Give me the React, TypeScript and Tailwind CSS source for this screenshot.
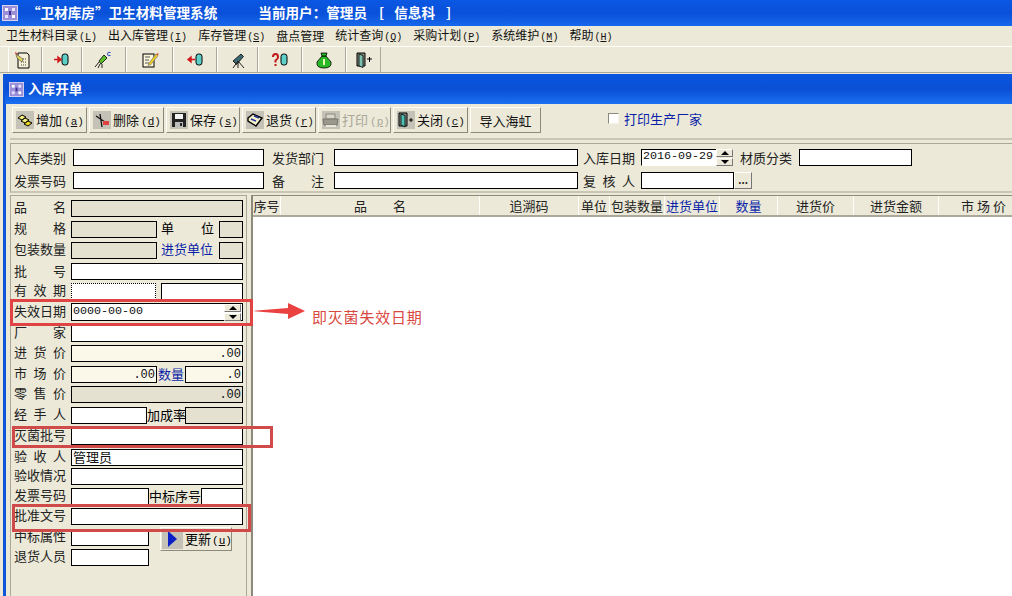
import type { ReactNode } from "react";

const song = "font-['Noto_Sans_CJK_SC','Liberation_Sans',sans-serif]";
const mono = "font-['Liberation_Mono','Noto_Sans_CJK_SC',monospace]";

const AppIcon = ({ small }: { small?: boolean }) => (
  <svg width={small ? 15 : 16} height={small ? 15 : 16} viewBox="0 0 16 16" className="shrink-0">
    <rect x="0.5" y="0.5" width="15" height="15" fill="#9a8fd8" stroke="#d8d4f0" />
    <rect x="3" y="3" width="3" height="3" fill="#fff" />
    <rect x="10" y="3" width="3" height="3" fill="#e8e4ff" />
    <rect x="7" y="6" width="2" height="4" fill="#3b2f90" />
    <rect x="3" y="10" width="3" height="3" fill="#e8e4ff" />
    <rect x="10" y="10" width="3" height="3" fill="#fff" />
  </svg>
);

const Cylinder = ({ x = 9 }: { x?: number }) => (
  <rect x={x} y="3" width="6" height="11" rx="2.5" fill="#5fd0c8" stroke="#000" />
);

const toolbarIcons: ReactNode[] = [
  <svg width="18" height="18" viewBox="0 0 18 18" key="a">
    <path d="M4 2h9l2 2v13H4z" fill="#f5f0d8" stroke="#000" />
    <path d="M7 8h6M7 11h6M7 14h6" stroke="#444" strokeDasharray="1 1" />
    <path d="M2 3l7 5-1 3-5-4z" fill="#e8d85a" stroke="#555" strokeWidth="0.7" />
    <path d="M1 1l2 1-1 2z" fill="#d01818" />
  </svg>,
  <svg width="18" height="18" viewBox="0 0 18 18" key="b">
    <Cylinder x={9} />
    <path d="M1 8.500h5M5 6l3 2.500L5 11z" stroke="#d01818" fill="#d01818" strokeWidth="1.400" />
  </svg>,
  <svg width="18" height="18" viewBox="0 0 18 18" key="c">
    <path d="M5 10l5-6 3 3-6 6z" fill="#5cc02c" stroke="#000" strokeWidth="0.8" />
    <path d="M1 16l4-5M4 17l2-4M8 17l0-4" stroke="#222" />
    <path d="M16.500 1.500q-3-1-3 1.500t3 1.500" stroke="#2040c0" fill="none" />
  </svg>,
  <svg width="18" height="18" viewBox="0 0 18 18" key="d">
    <rect x="2" y="3" width="11" height="13" fill="#fbf7dc" stroke="#000" />
    <path d="M4 6h5M4 9h4M4 12h4" stroke="#555" />
    <path d="M8 12l7-9 2 1.500-7 9-3 1z" fill="#f2d020" stroke="#777" strokeWidth="0.7" />
    <path d="M15 3l2 1.500 .5-2.500z" fill="#e04030" />
  </svg>,
  <svg width="18" height="18" viewBox="0 0 18 18" key="e">
    <Cylinder x={10} />
    <path d="M9 8.500H4M5 6L2 8.500 5 11z" stroke="#d01818" fill="#d01818" strokeWidth="1.400" />
  </svg>,
  <svg width="18" height="18" viewBox="0 0 18 18" key="f">
    <path d="M4 10l8-7 2.500 2.500-7 8z" fill="#3c6a70" stroke="#000" strokeWidth="0.8" />
    <path d="M9 10l-5 7M9 10l0 7M9 10l6 7" stroke="#222" />
  </svg>,
  <svg width="18" height="18" viewBox="0 0 18 18" key="g">
    <path d="M2 6q0-3 2.500-3t2.500 3q0 2-2.500 3.500v2" fill="none" stroke="#c01818" strokeWidth="2" />
    <rect x="3.500" y="13" width="2" height="2" fill="#c01818" />
    <Cylinder x={10} />
  </svg>,
  <svg width="18" height="18" viewBox="0 0 18 18" key="h">
    <path d="M7 5h4l5 6q1 6-7 6-8 0-7-6z" fill="#28b828" stroke="#000" strokeWidth="0.8" />
    <path d="M6 2h6l-1 3H7z" fill="#28b828" stroke="#000" strokeWidth="0.8" />
    <rect x="8" y="8" width="2" height="6" fill="#e8f8b0" />
  </svg>,
  <svg width="18" height="18" viewBox="0 0 18 18" key="i">
    <path d="M2 2h8v13H2z" fill="#8a8a80" stroke="#000" />
    <path d="M4 3l4 1.500v12L4 15z" fill="#7cc0b0" stroke="#000" strokeWidth="0.8" />
    <path d="M12 8h5M14.500 6v5" stroke="#000" />
  </svg>,
];

const toolbarCells = [
  "w-[34px] pr-[5px]",
  "w-[40px]",
  "w-[44px] pr-[3px]",
  "w-[47px]",
  "w-[44px]",
  "w-[41px]",
  "w-[44px]",
  "w-[44px]",
  "w-[35px]",
];

const Btn = ({
  icon,
  label,
  hot,
  width,
  disabled,
}: {
  icon?: ReactNode;
  label: string;
  hot?: string;
  width: string;
  disabled?: boolean;
}) => (
  <div
    className={`${width} h-[26px] flex items-center ${icon ? "pl-[3px]" : "justify-center"} gap-[2px] bg-[#ece9d8] border border-[#fffef8] border-r-[#8d8a7c] border-b-[#8d8a7c] text-[13px] leading-none shrink-0 ${
      disabled ? "text-[#a9a798]" : "text-[#111]"
    }`}
  >
    {icon}
    <span className="whitespace-nowrap">
      {label}
      {hot && (
        <span className={`${mono} text-[11px] ml-[2px]`}>
          (<span className="underline">{hot}</span>)
        </span>
      )}
    </span>
  </div>
);

const IconBg = ({ children }: { children: ReactNode }) => (
  <span className="w-[18px] h-[18px] bg-[#c4c2b6] flex items-center justify-center shrink-0">{children}</span>
);

const Input = ({
  className = "",
  children,
  tone = "white",
}: {
  className?: string;
  children?: ReactNode;
  tone?: "white" | "gray" | "cream";
}) => (
  <div
    className={`${className} h-[17px] border border-black flex items-center text-[12px] leading-none text-[#111] ${
      tone === "white" ? "bg-white" : tone === "gray" ? "bg-[#e4e1d1] border-[#55554c]" : "bg-[#fbf8ea]"
    }`}
  >
    {children}
  </div>
);

const Num = ({ v }: { v: string }) => <span className={`${mono} ml-auto pr-[1px]`}>{v}</span>;

const Label = ({ text, className = "" }: { text: string; className?: string }) => (
  <span className={`${className} w-[52px] flex justify-between text-[13px] leading-none text-[#222] shrink-0`}>
    {text.split("").map((c, i) => (
      <span key={i}>{c}</span>
    ))}
  </span>
);

const Spinner = () => (
  <div className="w-[17px] h-[17px] flex flex-col gap-[1px] shrink-0">
    <div className="flex-1 bg-[#ece9d8] border border-[#fffef8] border-r-[#777] border-b-[#777] flex items-center justify-center">
      <div className="w-0 h-0 border-x-[4px] border-x-transparent border-b-[4px] border-b-black" />
    </div>
    <div className="flex-1 bg-[#ece9d8] border border-[#fffef8] border-r-[#777] border-b-[#777] flex items-center justify-center">
      <div className="w-0 h-0 border-x-[4px] border-x-transparent border-t-[4px] border-t-black" />
    </div>
  </div>
);

const columns = [
  { t: "序号", w: "w-[28px]" },
  { t: "品　　名", w: "w-[199px]" },
  { t: "追溯码", w: "w-[99px]" },
  { t: "单位", w: "w-[31px]" },
  { t: "包装数量", w: "w-[55px]" },
  { t: "进货单位", w: "w-[55px]", blue: true },
  { t: "数量", w: "w-[58px]", blue: true },
  { t: "进货价", w: "w-[76px]" },
  { t: "进货金额", w: "w-[85px]" },
  { t: "市 场 价", w: "w-[90px]" },
];

const Row = ({ h, children }: { h: string; children: ReactNode }) => (
  <div className={`${h} flex items-start shrink-0`}>{children}</div>
);

export default function App() {
  return (
    <div className={`${song} relative w-[1012px] h-[596px] overflow-hidden bg-[#ece9d8] flex flex-col`}>
      {/* main title */}
      <div className="h-[26px] shrink-0 flex items-center pl-[2px] bg-gradient-to-b from-[#0a58e4] via-[#0a50d8] to-[#1668ec] text-white font-bold text-[13.6px] leading-none">
        <AppIcon />
        <span className="ml-[9px] whitespace-pre">“卫材库房”卫生材料管理系统</span>
        <span className="ml-[41px] whitespace-pre">当前用户：管理员</span>
        <span className="ml-[12px] whitespace-pre">[</span>
        <span className="ml-[10px] whitespace-pre">信息科</span>
        <span className="ml-[11px] whitespace-pre">]</span>
      </div>

      {/* menu */}
      <div className="h-[20px] shrink-0 flex items-center gap-[11px] pl-[6px] text-[12px] leading-none text-[#111]">
        {[
          ["卫生材料目录", "L"],
          ["出入库管理", "I"],
          ["库存管理", "S"],
          ["盘点管理", ""],
          ["统计查询", "Q"],
          ["采购计划", "P"],
          ["系统维护", "M"],
          ["帮助", "H"],
        ].map(([t, k]) => (
          <span key={t} className="whitespace-nowrap">
            {t}
            {k && (
              <span className={`${mono} text-[10px] ml-[1px]`}>
                (<span className="underline">{k}</span>)
              </span>
            )}
          </span>
        ))}
      </div>

      {/* icon toolbar */}
      <div className="h-[27px] shrink-0 flex items-stretch pl-[8px] border-t border-[#fffef8] border-b border-b-[#aca899]">
        {toolbarIcons.map((ic, i) => (
          <div
            key={i}
            className={`${toolbarCells[i]} flex items-center justify-center border-l border-[#fffef8] border-r border-r-[#aca899]`}
          >
            {ic}
          </div>
        ))}
      </div>

      {/* child window */}
      <div className="flex-1 mt-[1px] ml-[3px] flex flex-col border-l-[3px] border-[#0f55d8] min-h-0">
        <div className="h-[30px] shrink-0 -ml-[1px] flex items-center pl-[4px] gap-[4px] bg-gradient-to-b from-[#0a56e0] via-[#0a4fd6] to-[#1b6ff0] text-white font-bold text-[13.6px] leading-none">
          <AppIcon small />
          <span>入库开单</span>
        </div>

        <div className="flex-1 flex flex-col min-h-0 pl-[4px]">
          {/* button bar */}
          <div className="h-[36px] shrink-0 flex items-center pl-[2px] pb-[2px] gap-[2px] border-b-2 border-[#c9c6b5]">
            <Btn
              width="w-[75px]"
              label="增加"
              hot="a"
              icon={
                <IconBg>
                  <svg width="16" height="14" viewBox="0 0 16 14">
                    <path d="M1 5l4-3 4 2-4 3z" fill="#f4ee7a" stroke="#000" />
                    <path d="M4 8l4-3 4 2-4 3z" fill="#f4ee7a" stroke="#000" />
                    <path d="M7 11l4-3 4 2-4 3z" fill="#f0d820" stroke="#000" />
                  </svg>
                </IconBg>
              }
            />
            <Btn
              width="w-[75px]"
              label="删除"
              hot="d"
              icon={
                <IconBg>
                  <svg width="16" height="16" viewBox="0 0 16 16">
                    <path d="M2 4l9 6M6 2l2 13" stroke="#111" strokeWidth="1.300" />
                    <rect x="9" y="9" width="6" height="4" fill="#e04040" />
                  </svg>
                </IconBg>
              }
            />
            <Btn
              width="w-[74px]"
              label="保存"
              hot="s"
              icon={
                <IconBg>
                  <svg width="16" height="16" viewBox="0 0 16 16">
                    <path d="M1 1h14v14H1z" fill="#222" />
                    <rect x="4" y="2" width="8" height="5" fill="#f2f2f2" />
                    <rect x="4" y="10" width="8" height="5" fill="#bbb" />
                    <rect x="9" y="11" width="2" height="3" fill="#222" />
                  </svg>
                </IconBg>
              }
            />
            <Btn
              width="w-[74px]"
              label="退货"
              hot="r"
              icon={
                <IconBg>
                  <svg width="18" height="16" viewBox="0 0 18 16">
                    <path d="M2 6l5-4 9 4-6 8-8-5z" fill="#f4f0c8" stroke="#000" strokeWidth="1.400" />
                    <path d="M5 7l5 2M8 4l5 2" stroke="#2030a0" strokeWidth="1.400" />
                  </svg>
                </IconBg>
              }
            />
            <Btn
              width="w-[73px]"
              label="打印"
              hot="p"
              disabled
              icon={
                <IconBg>
                  <svg width="18" height="16" viewBox="0 0 18 16">
                    <path d="M4 2h9v5H4z" fill="#d8d6ca" stroke="#8a887c" />
                    <path d="M1 7h15l-1 6H2z" fill="#9a988c" stroke="#77756a" />
                    <path d="M4 13h10v2H4z" fill="#e8e6da" />
                  </svg>
                </IconBg>
              }
            />
            <Btn
              width="w-[75px]"
              label="关闭"
              hot="c"
              icon={
                <IconBg>
                  <svg width="16" height="16" viewBox="0 0 16 16">
                    <path d="M1 1h8v13H1z" fill="#888" stroke="#000" />
                    <path d="M3 2l4 1.500V15l-4-2z" fill="#4cc0b0" stroke="#000" strokeWidth="0.8" />
                    <path d="M11 8h4M13 6v4" stroke="#000" />
                  </svg>
                </IconBg>
              }
            />
            <Btn width="w-[71px]" label="导入海虹" />
            <div className="ml-[65px] -mt-[3px] flex items-center gap-[5px]">
              <div className="w-[11px] h-[11px] bg-white border border-[#8d8a7c] border-r-[#f6f4ea] border-b-[#f6f4ea]" />
              <span className="text-[13px] text-[#0a1fa8] leading-none">打印生产厂家</span>
            </div>
          </div>

          {/* header form */}
          <div className="mt-[3px] h-[50px] shrink-0 border-t border-b-2 border-t-[#aca899] border-b-[#c9c6b5] flex flex-col gap-[5px] pt-[4px] pl-[3px] border-l border-l-[#aca899]">
            <div className="flex items-center h-[18px] text-[13px] text-[#222] leading-none">
              <span className="w-[59px]">入库类别</span>
              <Input className="w-[191px]" />
              <span className="ml-[8px] w-[62px]">发货部门</span>
              <Input className="w-[244px]" />
              <span className="ml-[5px] w-[58px]">入库日期</span>
              <Input className="w-[75px] border-[#888] border-b-white border-r-0" tone="white">
                <span className={`${mono} pl-[1px] text-[11.7px] whitespace-nowrap`}>2016-09-29</span>
              </Input>
              <Spinner />
              <span className="ml-[7px] w-[59px]">材质分类</span>
              <Input className="w-[113px]" />
            </div>
            <div className="flex items-center h-[18px] text-[13px] text-[#222] leading-none">
              <span className="w-[59px]">发票号码</span>
              <Input className="w-[191px]" />
              <span className="ml-[8px] w-[52px] flex justify-between">
                <span>备</span>
                <span>注</span>
              </span>
              <span className="w-[10px]" />
              <Input className="w-[244px]" />
              <span className="ml-[5px] w-[52px] flex justify-between">
                <span>复</span>
                <span>核</span>
                <span>人</span>
              </span>
              <span className="w-[6px]" />
              <Input className="w-[93px]" />
              <div className="w-[18px] h-[17px] bg-[#ece9d8] border border-[#fffef8] border-r-[#777] border-b-[#777] flex items-center justify-center text-[10px] font-bold">
                ...
              </div>
            </div>
          </div>

          {/* body */}
          <div className="flex-1 flex mt-[2px] min-h-0">
            <div className="w-[237px] mr-[4px] shrink-0 pl-[3px] pt-[4px] border-l border-t border-r border-[#aca899] flex flex-col">
              <Row h="h-[21px]">
                <Label text="品名" />
                <Input className="ml-[5px] w-[172px]" tone="gray" />
              </Row>
              <Row h="h-[21px]">
                <Label text="规格" />
                <Input className="ml-[5px] w-[86px]" tone="gray" />
                <span className="ml-[4px] w-[53px] flex justify-between text-[13px] leading-none">
                  <span>单</span>
                  <span>位</span>
                </span>
                <Input className="ml-[5px] w-[24px]" tone="gray" />
              </Row>
              <Row h="h-[21px]">
                <Label text="包装数量" />
                <Input className="ml-[5px] w-[86px]" tone="gray" />
                <span className="ml-[4px] w-[53px] text-[13px] text-[#0a1fa8] leading-none whitespace-nowrap">进货单位</span>
                <Input className="ml-[5px] w-[24px]" tone="gray" />
              </Row>
              <Row h="h-[20px]">
                <Label text="批号" className="mt-[1px]" />
                <Input className="ml-[5px] w-[172px]" />
              </Row>
              <Row h="h-[20px]">
                <Label text="有效期" />
                <div className="ml-[5px] w-[85px] h-[17px] bg-white border border-dotted border-black" />
                <Input className="ml-[5px] w-[82px]" />
              </Row>
              <Row h="h-[22px]">
                <Label text="失效日期" className="mt-[1px]" />
                <Input className="ml-[5px] w-[172px] h-[18px]">
                  <span className={`${mono} pl-[1px] text-[11.7px] whitespace-nowrap`}>0000-00-00</span>
                  <div className="ml-auto mr-[1px]">
                    <Spinner />
                  </div>
                </Input>
              </Row>
              <Row h="h-[20px]">
                <Label text="厂家" />
                <Input className="ml-[5px] w-[172px]" />
              </Row>
              <Row h="h-[21px]">
                <Label text="进货价" />
                <Input className="ml-[5px] w-[172px]" tone="cream">
                  <Num v=".00" />
                </Input>
              </Row>
              <Row h="h-[20px]">
                <Label text="市场价" />
                <Input className="ml-[5px] w-[86px]" tone="cream">
                  <Num v=".00" />
                </Input>
                <span className="w-[28px] text-center text-[13px] text-[#0a1fa8] leading-none mt-[1px] whitespace-nowrap">数量</span>
                <Input className="w-[58px]" tone="cream">
                  <Num v=".0" />
                </Input>
              </Row>
              <Row h="h-[21px]">
                <Label text="零售价" />
                <Input className="ml-[5px] w-[172px]" tone="gray">
                  <Num v=".00" />
                </Input>
              </Row>
              <Row h="h-[21px]">
                <Label text="经手人" />
                <Input className="ml-[5px] w-[76px]" />
                <span className="w-[38px] text-center text-[13px] leading-none mt-[1px] whitespace-nowrap">加成率</span>
                <Input className="w-[58px]" tone="gray" />
              </Row>
              <Row h="h-[21px]">
                <Label text="灭菌批号" />
                <Input className="ml-[5px] w-[172px]" />
              </Row>
              <Row h="h-[19px]">
                <Label text="验收人" />
                <Input className="ml-[5px] w-[172px]">
                  <span className="pl-[1px] text-[13px] leading-none -mt-[2px] whitespace-nowrap">管理员</span>
                </Input>
              </Row>
              <Row h="h-[20px]">
                <Label text="验收情况" />
                <Input className="ml-[5px] w-[172px]" />
              </Row>
              <Row h="h-[20px]">
                <Label text="发票号码" />
                <Input className="ml-[5px] w-[78px]" />
                <span className="w-[52px] text-center text-[13px] leading-none mt-[1px] whitespace-nowrap">中标序号</span>
                <Input className="w-[42px]" />
              </Row>
              <Row h="h-[21px]">
                <Label text="批准文号" />
                <Input className="ml-[5px] w-[172px]" />
              </Row>
              <Row h="h-[20px]">
                <Label text="中标属性" />
                <Input className="ml-[5px] w-[78px]" />
                <div className="ml-[11px] w-[72px] h-[24px] -mt-[2px] flex items-center gap-[2px] bg-[#ece9d8] border border-[#fffef8] border-r-[#8d8a7c] border-b-[#8d8a7c] text-[13px] leading-none relative">
                  <span className="w-[21px] h-[20px] ml-[1px] bg-[#c4c2b6] flex items-center justify-center shrink-0">
                    <span className="w-0 h-0 border-y-[8px] border-y-transparent border-l-[9px] border-l-[#0a1fc8]" />
                  </span>
                  <span className="whitespace-nowrap">
                    更新<span className={`${mono} text-[11px] ml-[1px]`}>(<span className="underline">u</span>)</span>
                  </span>
                </div>
              </Row>
              <Row h="h-[20px]">
                <Label text="退货人员" />
                <Input className="ml-[5px] w-[78px]" />
              </Row>
            </div>

            {/* grid */}
            <div className="flex-1 min-w-0 border-l-2 border-t border-[#8d8a7c] bg-white overflow-hidden">
              <div className="h-[21px] flex bg-[#ece9d8] border-b-2 border-[#aca899] text-[13px] leading-none items-center w-[780px]">
                {columns.map((c) => (
                  <div
                    key={c.t}
                    className={`${c.w} h-full shrink-0 flex items-center justify-center whitespace-pre border-r border-[#fffef8] ${
                      c.blue ? "text-[#0a1fa8]" : "text-[#222]"
                    }`}
                  >
                    {c.t}
                  </div>
                ))}
              </div>
            </div>
          </div>
        </div>
      </div>

      {/* annotation */}
      <div className="absolute left-[10px] top-[299px] w-[243px] h-[27px] border-[3px] border-[#df4343]" />
      <div className="absolute left-[12px] top-[426px] w-[261px] h-[22px] border-[3px] border-[#d04a4a]" />
      <div className="absolute left-[12px] top-[504px] w-[239px] h-[28px] border-[3px] border-[#d04a4a]" />
      <svg width="54" height="20" viewBox="0 0 54 20" className="absolute left-[252px] top-[301px]">
        <path d="M0 10L36 7V2L53 10 36 18V13z" fill="#ea4240" />
      </svg>
      <span className="absolute left-[312px] top-[308px] text-[15px] leading-[18px] tracking-[0.8px] text-[#d9483f] whitespace-nowrap">
        即灭菌失效日期
      </span>
    </div>
  );
}
